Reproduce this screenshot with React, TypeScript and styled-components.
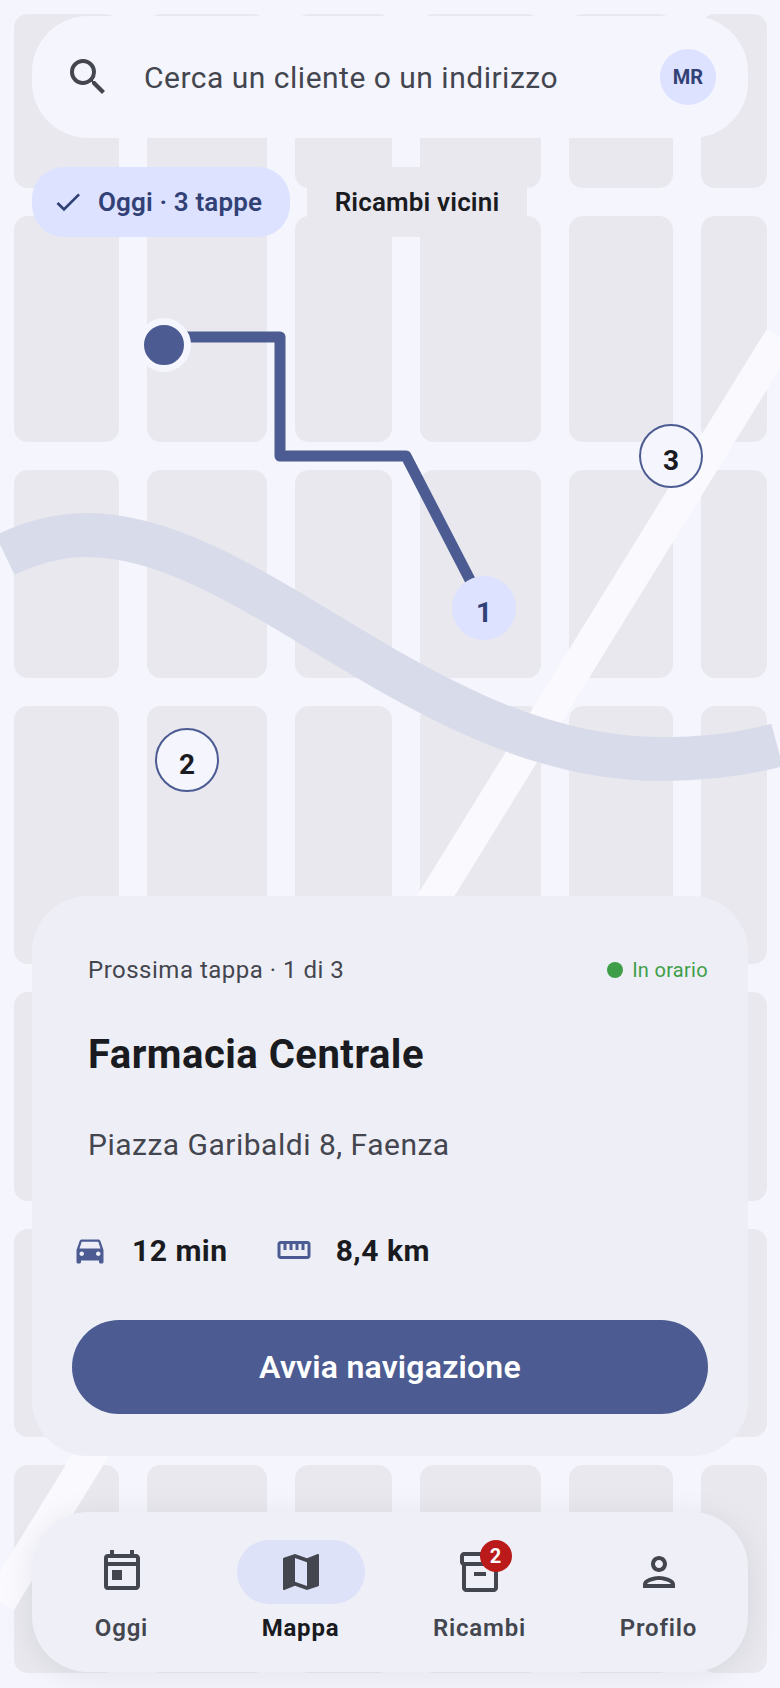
import {
  MdCheck,
  MdDirectionsCar,
  MdMap,
  MdOutlineInventory2,
  MdOutlinePerson,
  MdOutlineStraighten,
  MdOutlineToday,
  MdSearch,
} from "react-icons/md";
import styled, { createGlobalStyle } from "styled-components";

const GlobalStyle = createGlobalStyle`
  html, body {
    margin: 0;
    padding: 0;
    background: #f5f5fd;
  }

  * {
    box-sizing: border-box;
  }
`;

const Screen = styled.div`
  position: relative;
  width: 780px;
  height: 1688px;
  overflow: hidden;
  background-color: #f5f5fd;
  font-family: "Roboto", "Liberation Sans", sans-serif;
  color: #1a1b21;
`;

const MapCanvas = styled.div`
  position: absolute;
  inset: 0;
`;

const BlockGrid = styled.div`
  display: grid;
  grid-template-columns: 104.5px 120px 97.5px 120.5px 104px 66px;
  grid-template-rows: 174px 226px 208px 258px 209px 208px 208px;
  gap: 28px;
  padding: 14px;
`;

const Block = styled.div`
  background-color: #e8e8ee;
  border-radius: 14px;
`;

const MapLines = styled.svg`
  position: absolute;
  inset: 0;
`;

const StartDot = styled.div`
  position: absolute;
  left: 137px;
  top: 318px;
  width: 54px;
  height: 54px;
  border-radius: 50%;
  background-color: #4c5c92;
  border: 7px solid #f5f5fd;
`;

const Marker = styled.div<{ $x: number; $y: number; $active?: boolean }>`
  position: absolute;
  left: ${(p) => p.$x - 32}px;
  top: ${(p) => p.$y - 32}px;
  width: 64px;
  height: 64px;
  padding-top: 8px;
  border-radius: 50%;
  display: flex;
  align-items: center;
  justify-content: center;
  font-size: 28px;
  font-weight: 700;
  background-color: ${(p) => (p.$active ? "#dce2ff" : "#f5f5fd")};
  color: ${(p) => (p.$active ? "#324175" : "#1a1b21")};
  border: ${(p) => (p.$active ? "none" : "2px solid #4c5c92")};
`;

const Overlay = styled.div`
  position: relative;
  height: 100%;
  display: flex;
  flex-direction: column;
  padding: 16px 32px;
`;

const SearchBar = styled.div`
  height: 122px;
  flex-shrink: 0;
  display: flex;
  align-items: center;
  gap: 32px;
  padding: 0 32px;
  border-radius: 56px;
  background-color: #f5f5fd;
  color: #44464f;
`;

const SearchIcon = styled(MdSearch)`
  font-size: 48px;
  flex-shrink: 0;
`;

const SearchText = styled.div`
  flex: 1;
  font-size: 30px;
  letter-spacing: 0.5px;
`;

const Avatar = styled.div`
  width: 56px;
  height: 56px;
  border-radius: 50%;
  display: flex;
  align-items: center;
  justify-content: center;
  background-color: #dce2ff;
  color: #324175;
  font-size: 20px;
  font-weight: 700;
`;

const ChipRow = styled.div`
  display: flex;
  gap: 17px;
  margin-top: 29px;
`;

const Chip = styled.div<{ $selected?: boolean }>`
  height: 70px;
  display: flex;
  align-items: center;
  gap: 14px;
  padding: ${(p) => (p.$selected ? "0 28px 0 20px" : "0 27.5px")};
  border-radius: ${(p) => (p.$selected ? "32px" : "16px")};
  background-color: ${(p) => (p.$selected ? "#dce2ff" : "#e8e8ee")};
  color: ${(p) => (p.$selected ? "#324175" : "#1a1b21")};
  font-size: 26px;
  font-weight: 600;
  letter-spacing: 0.15px;

  svg {
    font-size: 32px;
  }
`;

const Card = styled.div`
  margin-top: auto;
  height: 560px;
  flex-shrink: 0;
  display: flex;
  flex-direction: column;
  padding: 40px;
  border-radius: 56px;
  background-color: #eeeff6;
  letter-spacing: 0.5px;
`;

const CardHead = styled.div`
  display: flex;
  align-items: center;
  justify-content: space-between;
  padding-left: 16px;
  height: 56px;
  margin-top: 6px;
`;

const NextStop = styled.div`
  font-size: 24px;
  color: #44464f;
`;

const Status = styled.div`
  display: flex;
  align-items: center;
  gap: 9px;
  font-size: 20px;
  letter-spacing: 0.3px;
  color: #3e9e48;

  &::before {
    content: "";
    width: 16px;
    height: 16px;
    border-radius: 50%;
    background-color: #3e9e48;
  }
`;

const PlaceName = styled.div`
  margin-top: 33px;
  padding-left: 16px;
  font-size: 40px;
  line-height: 48px;
  font-weight: 700;
`;

const PlaceAddress = styled.div`
  margin-top: 46px;
  padding-left: 16px;
  font-size: 30px;
  line-height: 40px;
  color: #44464f;
`;

const Stats = styled.div`
  display: flex;
  align-items: center;
  gap: 48px;
  margin-top: 67px;
`;

const Stat = styled.div`
  display: flex;
  align-items: center;
  gap: 24px;
  font-size: 30px;
  font-weight: 700;

  svg {
    font-size: 36px;
    color: #4c5c92;
  }
`;

const PrimaryButton = styled.button`
  height: 94px;
  margin-top: auto;
  margin-bottom: 2px;
  border: none;
  border-radius: 47px;
  background-color: #4c5c92;
  color: #ffffff;
  font-family: inherit;
  font-size: 32px;
  font-weight: 600;
  letter-spacing: 0.2px;
`;

const BottomNav = styled.nav`
  margin-top: 56px;
  height: 160px;
  flex-shrink: 0;
  display: grid;
  grid-template-columns: repeat(4, 1fr);
  padding-top: 28px;
  border-radius: 56px;
  background-color: #eff0f7;
  box-shadow: 0 4px 32px rgba(26, 27, 33, 0.08);
`;

const NavItem = styled.div<{ $active?: boolean }>`
  display: flex;
  flex-direction: column;
  align-items: center;
  gap: 10px;
  font-size: 24px;
  font-weight: ${(p) => (p.$active ? 700 : 600)};
  letter-spacing: 0.8px;
  color: ${(p) => (p.$active ? "#1a1b21" : "#44464f")};
`;

const NavIcon = styled.div<{ $active?: boolean }>`
  position: relative;
  width: 128px;
  height: 64px;
  display: flex;
  align-items: center;
  justify-content: center;
  border-radius: 32px;
  background-color: ${(p) => (p.$active ? "#dde2f8" : "transparent")};
  color: #44464f;
  font-size: 48px;
`;

const Badge = styled.span`
  position: absolute;
  left: 64px;
  top: 0;
  width: 32px;
  height: 32px;
  border-radius: 50%;
  display: flex;
  align-items: center;
  justify-content: center;
  background-color: #ba1a1a;
  color: #ffffff;
  font-size: 20px;
  font-weight: 700;
  letter-spacing: 0;
`;

const App = () => {
  return (
    <Screen>
      <GlobalStyle />
      <MapCanvas>
        <BlockGrid>
          {Array.from({ length: 42 }, (_, i) => (
            <Block key={i} />
          ))}
        </BlockGrid>
        <MapLines width="780" height="1688" viewBox="0 0 780 1688" fill="none">
          <path d="M780 338L0 1602" stroke="#f9f9fe" strokeWidth="32" />
          <path
            d="M5 555C30 543 58 535 87 535C252 535 427 759 660 759C700 759 740 755 777 745"
            stroke="#d8dbe9"
            strokeWidth="44"
          />
          <path
            d="M164 337H280V456H406L484 607"
            stroke="#4c5c92"
            strokeWidth="11"
            strokeLinejoin="round"
          />
        </MapLines>
        <StartDot />
        <Marker $x={484} $y={608} $active>
          1
        </Marker>
        <Marker $x={187} $y={760}>
          2
        </Marker>
        <Marker $x={671} $y={456}>
          3
        </Marker>
      </MapCanvas>

      <Overlay>
        <SearchBar>
          <SearchIcon />
          <SearchText>Cerca un cliente o un indirizzo</SearchText>
          <Avatar>MR</Avatar>
        </SearchBar>

        <ChipRow>
          <Chip $selected>
            <MdCheck />
            Oggi · 3 tappe
          </Chip>
          <Chip>Ricambi vicini</Chip>
        </ChipRow>

        <Card>
          <CardHead>
            <NextStop>Prossima tappa · 1 di 3</NextStop>
            <Status>In orario</Status>
          </CardHead>
          <PlaceName>Farmacia Centrale</PlaceName>
          <PlaceAddress>Piazza Garibaldi 8, Faenza</PlaceAddress>
          <Stats>
            <Stat>
              <MdDirectionsCar />
              12 min
            </Stat>
            <Stat>
              <MdOutlineStraighten />
              8,4 km
            </Stat>
          </Stats>
          <PrimaryButton>Avvia navigazione</PrimaryButton>
        </Card>

        <BottomNav>
          <NavItem>
            <NavIcon>
              <MdOutlineToday />
            </NavIcon>
            Oggi
          </NavItem>
          <NavItem $active>
            <NavIcon $active>
              <MdMap />
            </NavIcon>
            Mappa
          </NavItem>
          <NavItem>
            <NavIcon>
              <MdOutlineInventory2 />
              <Badge>2</Badge>
            </NavIcon>
            Ricambi
          </NavItem>
          <NavItem>
            <NavIcon>
              <MdOutlinePerson />
            </NavIcon>
            Profilo
          </NavItem>
        </BottomNav>
      </Overlay>
    </Screen>
  );
};

export default App;
